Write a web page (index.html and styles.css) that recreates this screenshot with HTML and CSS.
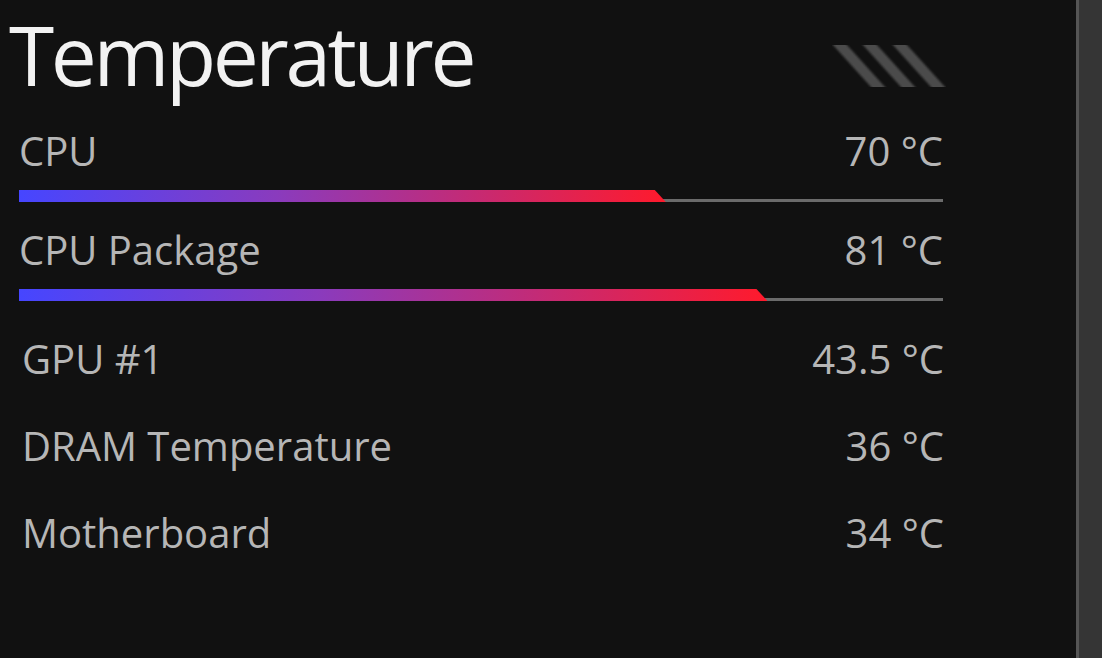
FILE: index.html
```html
<!DOCTYPE html>
<html lang="en">
<head>
    <meta charset="UTF-8">
    <title>Temperature</title>
    <link rel="stylesheet" href="styles.css">
</head>
<body>

    <div class="screen">
        <main class="panel">
            <header class="panel-head">
                <h1>Temperature</h1>
                <svg class="hatch" width="114" height="42" viewBox="0 0 114 42">
                    <defs>
                        <filter id="soft" x="-10%" y="0" width="120%" height="100%">
                            <feGaussianBlur stdDeviation="1.6 0.4"></feGaussianBlur>
                        </filter>
                    </defs>
                    <g fill="#4b4b4b" filter="url(#soft)">
                        <polygon points="1,0 15,0 53,42 39,42"></polygon>
                        <polygon points="31,0 45,0 83,42 69,42"></polygon>
                        <polygon points="61,0 75,0 113,42 99,42"></polygon>
                    </g>
                </svg>
            </header>

            <div class="sensor">
                <div class="sensor-row"><span>CPU</span><span>70 °C</span></div>
                <div class="bar"><div class="bar-fill" style="width: 70%"></div></div>
            </div>

            <div class="sensor">
                <div class="sensor-row"><span>CPU Package</span><span>81 °C</span></div>
                <div class="bar"><div class="bar-fill" style="width: 81%"></div></div>
            </div>

            <div class="plain-list">
                <div class="sensor-row plain"><span>GPU #1</span><span>43.5 °C</span></div>
                <div class="sensor-row plain"><span>DRAM Temperature</span><span>36 °C</span></div>
                <div class="sensor-row plain"><span>Motherboard</span><span>34 °C</span></div>
            </div>
        </main>

        <aside class="scrollbar"></aside>
    </div>

</body>
</html>
```

FILE: styles.css
```css
html, body {
    margin: 0;
    padding: 0;
    height: 100%;
    background-color: #111111;
}
body {
    font-family: "Open Sans", "Noto Sans", sans-serif;
    overflow: hidden;
}
.screen {
    display: flex;
    height: 658px;
}
.panel {
    width: 1076px;
    padding: 4px 0 0 0;
    box-sizing: border-box;
}
.panel-head {
    display: flex;
    align-items: flex-start;
    justify-content: space-between;
    width: 946px;
    height: 99px;
}
.panel-head h1 {
    margin: 0 0 0 9px;
    font-size: 82px;
    line-height: 100px;
    font-weight: 400;
    letter-spacing: -3.4px;
    color: #f2f2f2;
}
.hatch {
    margin-top: 41px;
}
.sensor {
    width: 924px;
    margin-left: 19px;
    padding-top: 24px;
}
.sensor-row {
    display: flex;
    justify-content: space-between;
    font-size: 40px;
    line-height: 48px;
    color: #b6b6b6;
}
.bar {
    position: relative;
    height: 12px;
    margin-top: 15px;
}
.bar::before {
    content: "";
    position: absolute;
    left: 0;
    right: 0;
    bottom: 0;
    height: 3px;
    background-color: #6b6b6b;
}
.bar-fill {
    position: relative;
    height: 12px;
    background: linear-gradient(to right, #4646ff, #8a3bbd 40%, #ff1a2c);
    clip-path: polygon(0 0, calc(100% - 11px) 0, 100% 100%, 0 100%);
}
.plain-list {
    display: flex;
    flex-direction: column;
    gap: 39px;
    width: 922px;
    margin: 34px 0 0 22px;
}
.scrollbar {
    width: 23px;
    border-left: 3px solid #555555;
    background-color: #353535;
}
```
